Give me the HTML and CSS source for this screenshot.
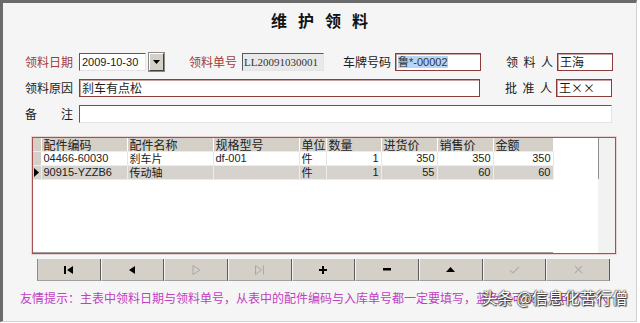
FILE: index.html
```html
<!DOCTYPE html>
<html lang="zh-CN">
<head>
    <meta charset="UTF-8">
    <title>维护领料</title>
    <link rel="stylesheet" href="styles.css">
</head>
<body>
    <div class="window">
        <h1 class="title">维护领料</h1>

        <!-- Master record -->
        <div class="form">
            <div class="row">
                <span class="label required">领料日期</span>
                <span class="field sunken date">2009-10-30</span>
                <span class="drop-btn"><svg width="7" height="4" viewBox="0 0 7 4"><path d="M0 0h7L3.5 4z" fill="#000"/></svg></span>
                <span class="label required gap-order">领料单号</span>
                <span class="field sunken readonly order">LL20091030001</span>
                <span class="label gap-plate">车牌号码</span>
                <span class="field framed plate"><span class="selected">鲁*-00002</span></span>
                <span class="label spaced gap-person">领料人</span>
                <span class="field framed person">王海</span>
            </div>
            <div class="row">
                <span class="label">领料原因</span>
                <span class="field framed reason">刹车有点松</span>
                <span class="label spaced gap-person">批准人</span>
                <span class="field framed person">王××</span>
            </div>
            <div class="row">
                <span class="label wide">备<span>注</span></span>
                <span class="field sunken memo"></span>
            </div>
        </div>

        <!-- Detail grid -->
        <div class="grid-box">
            <div class="grid-main">
                <table class="grid">
                    <colgroup>
                        <col style="width:8px"><col style="width:86px"><col style="width:86px"><col style="width:86px">
                        <col style="width:27px"><col style="width:55px"><col style="width:56px"><col style="width:56px"><col style="width:60px">
                    </colgroup>
                    <thead>
                        <tr>
                            <th class="sel"></th>
                            <th>配件编码</th>
                            <th>配件名称</th>
                            <th>规格型号</th>
                            <th>单位</th>
                            <th>数量</th>
                            <th>进货价</th>
                            <th>销售价</th>
                            <th>金额</th>
                        </tr>
                    </thead>
                    <tbody>
                        <tr>
                            <td class="sel"></td>
                            <td class="code">04466-60030</td>
                            <td>刹车片</td>
                            <td class="code">df-001</td>
                            <td>件</td>
                            <td class="num">1</td>
                            <td class="num">350</td>
                            <td class="num">350</td>
                            <td class="num">350</td>
                        </tr>
                        <tr class="current">
                            <td class="sel"><svg width="5" height="9" viewBox="0 0 5 9"><path d="M0 0l5 4.5L0 9z" fill="#000"/></svg></td>
                            <td class="code">90915-YZZB6</td>
                            <td>传动轴</td>
                            <td></td>
                            <td>件</td>
                            <td class="num">1</td>
                            <td class="num">55</td>
                            <td class="num">60</td>
                            <td class="num">60</td>
                        </tr>
                    </tbody>
                </table>
                <div class="grid-rest"></div>
            </div>
            <div class="grid-side"><div class="vbar"></div></div>
        </div>

        <!-- Navigator -->
        <div class="nav">
            <button class="nav-btn"><svg width="9" height="8" viewBox="0 0 9 8"><path d="M0 0h2v8H0z M9 0v8L3 4z" fill="#000"/></svg></button>
            <button class="nav-btn"><svg width="6" height="8" viewBox="0 0 6 8"><path d="M6 0v8L0 4z" fill="#000"/></svg></button>
            <button class="nav-btn off"><svg width="9" height="10" viewBox="0 0 9 10"><path d="M1 0.5v9L8 5z" fill="none" stroke="#a9a9a9"/></svg></button>
            <button class="nav-btn off"><svg width="10" height="10" viewBox="0 0 10 10"><path d="M0.5 0.5v9L6.5 5z M8.5 0.5v9" fill="none" stroke="#a9a9a9"/></svg></button>
            <button class="nav-btn"><svg width="8" height="8" viewBox="0 0 8 8"><path d="M3 0h2v3h3v2H5v3H3V5H0V3h3z" fill="#000"/></svg></button>
            <button class="nav-btn"><svg width="8" height="3" viewBox="0 0 8 3"><path d="M0 0h8v2.5H0z" fill="#000"/></svg></button>
            <button class="nav-btn"><svg width="9" height="5" viewBox="0 0 9 5"><path d="M0 5h9L4.5 0z" fill="#000"/></svg></button>
            <button class="nav-btn off"><svg width="11" height="8" viewBox="0 0 11 8"><path d="M1 4.5l3 2.5L10 1" fill="none" stroke="#b0b0b0" stroke-width="1.2"/></svg></button>
            <button class="nav-btn off"><svg width="9" height="9" viewBox="0 0 9 9"><path d="M1 1l7 7M8 1L1 8" fill="none" stroke="#b0b0b0" stroke-width="1.2"/></svg></button>
        </div>

        <p class="hint">友情提示：主表中领料日期与领料单号，从表中的配件编码与入库单号都一定要填写，蓝色字可录入也可不录入</p>

        <div class="watermark">头条 @信息化苦行僧</div>
    </div>
</body>
</html>
```

FILE: styles.css
```css
/* Variables */
:root {
    --face: #d4d0c8;
    --frame: #6b6b6b;
    --window-bg: #f5f5f5;
    --red-label: #a13b3b;
    --red-border: #8c3a3a;
    --hint: #c23ec2;
    --cjk: "Noto Sans CJK SC", "Liberation Sans", sans-serif;
}

/* Global */
body {
    margin: 0;
    background: #ffffff;
    font-family: var(--cjk);
    font-size: 12px;
    color: #1a1a1a;
}

.window {
    position: relative;
    width: 633px;
    height: 318px;
    background: var(--window-bg);
    border-top: 3px solid var(--frame);
    border-left: 3px solid var(--frame);
    border-right: 1px solid #d2d2d2;
    border-bottom: 1px solid #d2d2d2;
    overflow: hidden;
}

.title {
    margin: 5px 0 0;
    height: 24px;
    line-height: 24px;
    text-align: center;
    font-size: 16px;
    font-weight: bold;
    letter-spacing: 11px;
    text-indent: 11px;
    color: #111;
}

/* Form */
.form {
    margin-top: 21px;
    padding-left: 22px;
    display: flex;
    flex-direction: column;
    gap: 8px;
}

.row {
    display: flex;
    align-items: center;
    height: 18px;
}

.label {
    width: 48px;
    margin-right: 6px;
    line-height: 18px;
    white-space: nowrap;
}

.label.required {
    color: var(--red-label);
}

.label.spaced {
    width: 47px;
    margin-right: 4px;
    letter-spacing: 5.5px;
}

.label.wide {
    display: flex;
    justify-content: space-between;
}

.gap-order { margin-left: 25px; margin-right: 5px; }
.gap-plate { margin-left: 19px; margin-right: 4px; }
.gap-person { margin-left: 25px; }

.field {
    box-sizing: border-box;
    height: 18px;
    line-height: 16px;
    padding: 0 2px;
    background: #ffffff;
    white-space: nowrap;
}

.field.sunken {
    border-top: 1px solid #5a5a5a;
    border-left: 1px solid #5a5a5a;
    border-right: 1px solid #e4e4e4;
    border-bottom: 1px solid #e4e4e4;
}

.field.framed {
    border: 1px solid var(--red-border);
    box-shadow: inset 1px 1px 0 #c9a0a0;
}

.field.readonly {
    padding: 0 1px;
    background: #e9e9e9;
    font-family: "Liberation Serif", serif;
    font-size: 11px;
    color: #333;
}

.date {
    width: 67px;
    font-family: "Liberation Sans", sans-serif;
    font-size: 11px;
}

.drop-btn {
    box-sizing: border-box;
    width: 15px;
    height: 18px;
    margin-left: 3px;
    background: var(--face);
    border: 1px solid #404040;
    border-top-color: #ffffff;
    border-left-color: #ffffff;
    box-shadow: 0 0 0 1px #8a8a8a;
    display: flex;
    align-items: center;
    justify-content: center;
}

.order { width: 82px; }
.plate { width: 86px; font-family: "Liberation Sans", var(--cjk); font-size: 11px; }
.person { width: 56px; font-size: 12px; }
.reason { width: 401px; }
.memo { width: 533px; }

.selected {
    background: #b5d6f7;
    color: #333;
}

/* Grid */
.grid-box {
    box-sizing: border-box;
    display: flex;
    width: 584px;
    height: 117px;
    margin: 14px 0 0 29px;
    border: 1px solid #a85050;
    box-shadow: 0 0 0 1px rgba(214, 150, 150, 0.35);
}

.grid-main {
    width: 565px;
    background: #ffffff;
    display: flex;
    flex-direction: column;
}

.grid {
    width: 520px;
    border-collapse: collapse;
    table-layout: fixed;
    font-size: 11px;
}

.grid th,
.grid td {
    padding: 0 2px;
    height: 13px;
    line-height: 13px;
    border-right: 1px solid #e6e6e6;
    border-bottom: 1px solid #ececec;
    text-align: left;
    white-space: nowrap;
}

.grid th {
    background: var(--face);
    font-weight: normal;
    font-size: 12px;
    color: #222;
    border-right-color: #ffffff;
}

.grid .sel {
    padding: 0;
    background: var(--face);
    border-right: 1px solid #ffffff;
}

.grid .sel svg {
    display: block;
    margin-left: 1px;
}

.grid .code {
    font-family: "Liberation Sans", sans-serif;
    color: #222;
}

.grid .num {
    text-align: right;
    font-family: "Liberation Sans", sans-serif;
}

.grid tr.current td {
    background: #d6d3ce;
    border-right-color: #ededed;
}

.grid-rest {
    flex: 1;
    width: 520px;
    border-bottom: 1px solid #a0a0a0;
}

.grid-side {
    flex: 1;
    background: #f2f2f2;
}

.vbar {
    width: 0;
    height: 41px;
    border-left: 1px solid #8e8e8e;
}

/* Navigator */
.nav {
    display: grid;
    grid-template-columns: repeat(9, 1fr);
    width: 573px;
    height: 22px;
    margin: 5px 0 0 34px;
}

.nav-btn {
    margin: 0;
    padding: 0;
    background: var(--face);
    border: none;
    border-left: 1px solid #f4f4f4;
    border-right: 1px solid #5c5c5c;
    border-bottom: 1px solid #a0a0a0;
    display: flex;
    align-items: center;
    justify-content: center;
}

.nav-btn:first-child {
    border-left: 1px solid #8c8c8c;
}

/* Hint */
.hint {
    margin: 9px 0 0 17px;
    height: 16px;
    line-height: 16px;
    color: var(--hint);
    font-size: 12px;
    white-space: nowrap;
}

/* Watermark over the hint */
.watermark {
    position: absolute;
    left: 478px;
    top: 282px;
    font-size: 16px;
    color: #ffffff;
    white-space: nowrap;
    text-shadow: 0 0 1px #222, 0 0 2px #222, 1px 1px 1px #444;
}
```
